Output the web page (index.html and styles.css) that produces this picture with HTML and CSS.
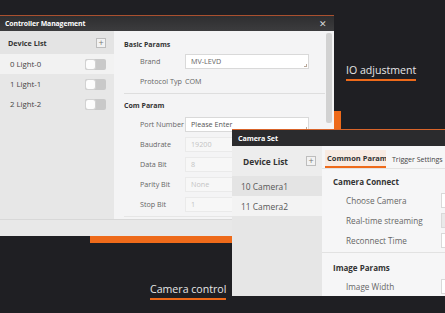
FILE: index.html
```html
<!DOCTYPE html>
<html>
<head>
<meta charset="utf-8">
<link rel="stylesheet" href="styles.css">
</head>
<body>
<div class="desk">
  <div class="orange-block"></div>

  <div class="caption caption-io">IO adjustment</div>
  <div class="caption caption-cam">Camera control</div>

  <section class="win win-ctrl">
    <header class="titlebar">
      <span class="title">Controller Management</span>
      <span class="close">&#x2715;</span>
    </header>
    <div class="body">
      <aside class="list">
        <div class="list-head">
          <span>Device List</span>
          <span class="plus">+</span>
        </div>
        <div class="list-row sel"><span>0 Light-0</span><span class="toggle"><i></i></span></div>
        <div class="list-row"><span>1 Light-1</span><span class="toggle"><i></i></span></div>
        <div class="list-row"><span>2 Light-2</span><span class="toggle"><i></i></span></div>
      </aside>
      <div class="pane">
        <div class="sec sec1">
          <div class="sec-title">Basic Params</div>
          <div class="row"><span class="lbl">Brand</span><span class="inp">MV-LEVD<b class="grip"></b></span></div>
          <div class="row"><span class="lbl">Protocol Typ</span><span class="val">COM</span></div>
        </div>
        <div class="sec sec2">
          <div class="sec-title">Com Param</div>
          <div class="row"><span class="lbl">Port Number</span><span class="inp ph">Please Enter<b class="grip"></b></span></div>
          <div class="row"><span class="lbl">Baudrate</span><span class="inp dis">19200</span></div>
          <div class="row"><span class="lbl">Data Bit</span><span class="inp dis">8</span></div>
          <div class="row"><span class="lbl">Parity Bit</span><span class="inp dis">None</span></div>
          <div class="row"><span class="lbl">Stop Bit</span><span class="inp dis">1</span></div>
        </div>
        <div class="scroll"></div>
      </div>
    </div>
    <footer class="foot"></footer>
  </section>

  <section class="win win-cam">
    <header class="titlebar cam-bar">
      <span class="title">Camera Set</span>
    </header>
    <div class="body">
      <aside class="list cam-list">
        <div class="list-head cam-head">
          <span>Device List</span>
          <span class="plus">+</span>
        </div>
        <div class="list-row cam-row">10 Camera1</div>
        <div class="list-row cam-row sel">11 Camera2</div>
      </aside>
      <div class="pane cam-pane">
        <nav class="tabs">
          <span class="tab active">Common Params</span>
          <span class="tab">Trigger Settings</span>
        </nav>
        <div class="csec">
          <div class="csec-title">Camera Connect</div>
          <div class="crow"><span class="clbl">Choose Camera</span><span class="cinp"></span></div>
          <div class="crow"><span class="clbl">Real-time streaming</span><span class="cinp dis"></span></div>
          <div class="crow"><span class="clbl">Reconnect Time</span><span class="cinp"></span></div>
        </div>
        <div class="csec csec2">
          <div class="csec-title">Image Params</div>
          <div class="crow"><span class="clbl">Image Width</span><span class="cinp"></span></div>
        </div>
      </div>
    </div>
  </section>
</div>
</body>
</html>
```

FILE: styles.css
```css
* { box-sizing: border-box; margin: 0; padding: 0; }
html, body { width: 445px; height: 313px; overflow: hidden; background: #1e1e22; }
body { font-family: "Open Sans", "Noto Sans", sans-serif; color: #444; }

.desk { position: relative; width: 445px; height: 313px; background: #1f1f23; }

.orange-block { position: absolute; left: 90px; top: 111px; width: 251px; height: 132px; background: #ee6a1a; }

.caption { position: absolute; color: #e6e6e6; font-size: 10.6px; line-height: 14px; padding-bottom: 2px; border-bottom: 2px solid #ee6a1a; }
.caption-io { left: 346px; top: 63px; }
.caption-cam { left: 150px; top: 282px; }

.win { position: absolute; display: flex; flex-direction: column; overflow: hidden; }
.win-ctrl { left: 0; top: 15px; width: 334px; height: 221px; background: #f4f4f5; }
.win-cam { left: 232px; top: 129px; width: 230px; height: 167px; background: #f6f6f7; }

.titlebar { height: 16px; flex: none; display: flex; align-items: center; justify-content: space-between; padding: 0 7px 0 5px; border-top: 1px solid #a9502f; background: linear-gradient(#2e2e30, #3c3c3e); color: #fff; }
.title { font-size: 6.9px; font-weight: 700; letter-spacing: -0.1px; }
.close { font-size: 8.5px; color: #d8d8d8; }
.cam-bar { height: 17px; border-top-color: #d9642a; background: #2b2b2d; padding-left: 6px; }
.cam-bar .title { font-size: 7.2px; }

.body { flex: 1; display: flex; min-height: 0; }

.list { width: 114px; flex: none; background: #e7e7e7; display: flex; flex-direction: column; }
.list-head { height: 23px; display: flex; align-items: center; justify-content: space-between; padding: 0 8px 0 8px; font-size: 7.2px; font-weight: 700; color: #333; background: #e4e4e4; }
.plus { width: 10px; height: 10px; border: 1px solid #bdbdbd; background: #f2f2f2; color: #777; font-size: 9px; line-height: 8px; text-align: center; font-weight: 400; }
.list-row { height: 20px; display: flex; align-items: center; justify-content: space-between; padding: 0 8px 0 10px; font-size: 7.8px; color: #444; }
.list-row.sel { background: #f2f2f2; }
.toggle { width: 21px; height: 11px; border-radius: 2px; background: #c9c9c9; position: relative; }
.toggle i { position: absolute; left: 0; top: 0; width: 11px; height: 11px; border-radius: 3px; background: #fdfdfd; border: 1px solid #d2d2d2; }

.pane { flex: 1; position: relative; padding: 6px 9px 0 10px; background: #f4f4f5; }
.sec-title { height: 14px; display: flex; align-items: center; font-size: 7px; font-weight: 700; color: #333; }
.sec1 { border-bottom: 1px solid #dedede; padding-bottom: 2px; }
.sec2 { padding-top: 4px; border-bottom: 1px solid #e6e6e6; padding-bottom: 2px; }
.sec2 .sec-title { margin-bottom: 2px; }
.row { height: 20px; display: flex; align-items: center; padding-left: 16px; font-size: 7.2px; color: #666; }
.lbl { width: 45px; flex: none; white-space: nowrap; }
.val { color: #666; }
.inp { position: relative; width: 124px; height: 15px; border: 1px solid #d9d9d9; background: #fff; display: flex; align-items: center; padding-left: 5px; color: #666; }
.inp.ph { color: #555; }
.inp.dis { background: #f7f7f7; border-color: #eaeaea; color: #c4c4c4; }
.grip { position: absolute; right: 1px; bottom: 1px; width: 3px; height: 3px; border-right: 1px solid #b9a89a; border-bottom: 1px solid #b9a89a; }
.scroll { position: absolute; right: 2px; top: 2px; width: 6px; height: 90px; border-radius: 2px; background: #d2d2d2; }

.foot { height: 17px; flex: none; background: #e8e8e8; border-top: 1px solid #d8d8d8; }

.cam-list { width: 90px; background: #e6e6e6; }
.cam-head { height: 30px; padding: 0 6px 0 11px; font-size: 8.4px; background: #ededed; }
.cam-row { font-size: 8.4px; color: #555; padding-left: 9px; background: #e4e4e4; }
.cam-row.sel { background: #f3f3f3; }

.cam-pane { padding: 4px 0 0 0; background: #f6f6f7; }
.tabs { height: 19px; display: flex; align-items: flex-end; padding-left: 3px; border-bottom: 1px solid #e3e3e3; gap: 6px; }
.tab { height: 18px; display: flex; align-items: center; font-size: 7px; color: #444; white-space: nowrap; }
.tab.active { width: 61px; overflow: hidden; font-size: 7.5px; font-weight: 700; background: #f8ebe3; border-bottom: 2px solid #ee6a1a; padding-left: 2px; color: #333; }
.csec { padding: 5px 0 2px 11px; border-bottom: 1px solid #e2e2e2; }
.csec2 { border-bottom: none; padding-top: 7px; }
.csec-title { height: 14px; display: flex; align-items: center; font-size: 8px; font-weight: 700; color: #333; margin-bottom: 2px; }
.crow { height: 20px; display: flex; align-items: center; padding-left: 13px; font-size: 8.2px; color: #666; }
.clbl { width: 95px; flex: none; white-space: nowrap; }
.cinp { width: 40px; height: 15px; border: 1px solid #d9d9d9; background: #fff; }
.cinp.dis { background: #e9e9e9; }
```
